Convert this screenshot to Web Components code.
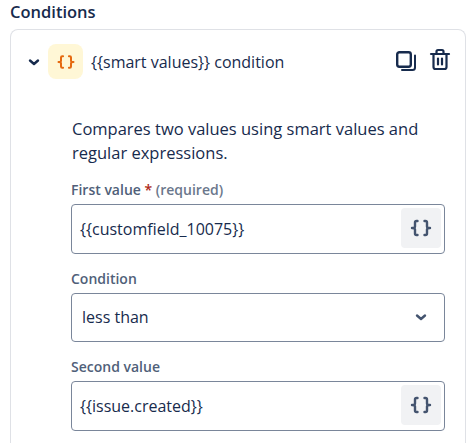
<!DOCTYPE html>
<html>
<head>
<meta charset="utf-8">
<style>
html, body { margin: 0; height: 443px; overflow: hidden; background: #fff; }
body { font-family: "Open Sans", "Noto Sans", sans-serif; color: #172b4d; }
</style>
</head>
<body>
<condition-panel heading="Conditions">
    <condition-card title-text="{{smart values}} condition">
        <p>Compares two values using smart values and regular expressions.</p>
        <value-field label="First value" required value="{{customfield_10075}}"></value-field>
        <select-field label="Condition" value="less than"></select-field>
        <value-field label="Second value" value="{{issue.created}}"></value-field>
    </condition-card>
</condition-panel>

<script>
const BRACES = `<svg width="24" height="24" viewBox="0 0 24 24" fill="none" stroke="currentColor" stroke-width="2.4" stroke-linecap="round" stroke-linejoin="round"><path d="M8.500 5H7.500C6.500 5 6 5.500 6 6.500V10.500C6 11.400 5.400 12 3 12c2.400 0 3 .6 3 1.500v4C6 18.500 6.500 19 7.500 19h1"/><path d="M15.500 5h1c1 0 1.500.5 1.500 1.500v4c0 .9.6 1.500 3 1.500-2.400 0-3 .6-3 1.500v4c0 1-.5 1.500-1.500 1.500h-1"/></svg>`;

class ConditionPanel extends HTMLElement {
    constructor() {
        super();
        this.attachShadow({mode: 'open'});
        this.shadowRoot.innerHTML = `
        <style>
        :host { display: block; padding: 0 2px 0 10px; }
        h2 { margin: 0; padding-top: 1px; height: 28px; font-size: 16.5px; line-height: 22px; font-weight: 600; color: #172b4d; }
        </style>
        <h2></h2>
        <slot></slot>`;
        this.shadowRoot.querySelector('h2').textContent = this.getAttribute('heading');
    }
}

class ConditionCard extends HTMLElement {
    constructor() {
        super();
        this.attachShadow({mode: 'open'});
        this.shadowRoot.innerHTML = `
        <style>
        :host { display: block; height: 414px; box-sizing: border-box; border: 1px solid #dfe1e6; border-bottom: 0; border-radius: 8px 8px 0 0; }
        header { display: flex; align-items: center; height: 35px; margin-top: 14px; padding: 0 14px 0 17px; }
        .chevron { width: 12px; height: 12px; margin-right: 8px; color: #172b4d; }
        .tile { width: 35px; height: 35px; border-radius: 8px; background: #fff7d6; color: #e56910; display: flex; align-items: center; justify-content: center; margin-right: 8px; }
        .tile svg { width: 20px; height: 20px; }
        .title { flex: 1; font-size: 16px; white-space: nowrap; color: #172b4d; }
        .actions { display: flex; gap: 12px; color: #172b4d; margin-top: -4px; }
        .body { padding: 38px 20px 0 60px; }
        ::slotted(p) { margin: 0 0 15px 1px; font-size: 16.5px; line-height: 23.500px; color: #172b4d; }
        </style>
        <header>
            <svg class="chevron" viewBox="0 0 12 12" fill="none" stroke="currentColor" stroke-width="2.4" stroke-linecap="round" stroke-linejoin="round"><path d="M2 4.500l4 3.500 4-3.500"/></svg>
            <span class="tile">${BRACES}</span>
            <span class="title"></span>
            <span class="actions">
                <svg width="23" height="23" viewBox="0 0 23 23" fill="none" stroke="currentColor" stroke-linejoin="round"><rect x="3.200" y="4.200" width="13.600" height="14.600" rx="2.200" stroke-width="2.400"/><path d="M21 7.500v12c0 1.400-1.100 2.500-2.500 2.500H8" stroke-width="2" stroke-linecap="round"/></svg>
                <svg width="22" height="23" viewBox="0 0 22 23" fill="none" stroke="currentColor" stroke-width="2.200" stroke-linecap="round" stroke-linejoin="round"><path d="M2 6h18"/><path d="M7.500 5.500V3.500C7.500 2.500 8 2 9 2h4c1 0 1.500.5 1.500 1.500v2"/><path d="M4.500 6v13c0 1.200.8 2 2 2h9c1.200 0 2-.8 2-2V6"/><path d="M9 10.500v6M13 10.500v6"/></svg>
            </span>
        </header>
        <div class="body"><slot></slot></div>`;
        this.shadowRoot.querySelector('.title').textContent = this.getAttribute('title-text');
    }
}

class ValueField extends HTMLElement {
    constructor() {
        super();
        this.attachShadow({mode: 'open'});
        this.shadowRoot.innerHTML = `
        <style>
        :host { display: block; margin-bottom: 14px; }
        label { display: block; height: 22px; margin-bottom: 3px; font-size: 14px; line-height: 22px; font-weight: 600; color: #505f79; white-space: nowrap; }
        .star { color: #ae2a19; }
        .req { color: #6b778c; }
        .box { display: flex; align-items: center; justify-content: space-between; height: 49.500px; box-sizing: border-box; border: 1px solid #7a869a; border-radius: 4px; padding: 0 3px 0 8px; }
        .value { font-size: 16px; color: #172b4d; white-space: nowrap; padding-top: 1px; }
        .btn { width: 40px; height: 40px; border-radius: 4px; background: #f1f2f4; color: #44546f; display: flex; align-items: center; justify-content: center; margin-top: -1px; }
        </style>
        <label></label>
        <div class="box"><span class="value"></span><span class="btn">${BRACES}</span></div>`;
        const label = this.shadowRoot.querySelector('label');
        label.textContent = this.getAttribute('label');
        if (this.hasAttribute('required')) {
            label.insertAdjacentHTML('beforeend', '<span class="star"> *</span> <span class="req">(required)</span>');
        }
        this.shadowRoot.querySelector('.value').textContent = this.getAttribute('value');
    }
}

class SelectField extends HTMLElement {
    constructor() {
        super();
        this.attachShadow({mode: 'open'});
        this.shadowRoot.innerHTML = `
        <style>
        :host { display: block; margin-bottom: 14px; }
        label { display: block; height: 22px; margin-bottom: 3px; font-size: 14px; line-height: 22px; font-weight: 600; color: #505f79; }
        .box { display: flex; align-items: center; justify-content: space-between; height: 49.500px; box-sizing: border-box; border: 1px solid #7a869a; border-radius: 4px; padding: 0 17px 0 10px; }
        .value { font-size: 16px; color: #172b4d; }
        svg { color: #44546f; }
        </style>
        <label></label>
        <div class="box"><span class="value"></span>
            <svg width="12" height="12" viewBox="0 0 12 12" fill="none" stroke="currentColor" stroke-width="2.400" stroke-linecap="round" stroke-linejoin="round"><path d="M2 4.500l4 3.500 4-3.500"/></svg>
        </div>`;
        this.shadowRoot.querySelector('label').textContent = this.getAttribute('label');
        this.shadowRoot.querySelector('.value').textContent = this.getAttribute('value');
    }
}

customElements.define('condition-panel', ConditionPanel);
customElements.define('condition-card', ConditionCard);
customElements.define('value-field', ValueField);
customElements.define('select-field', SelectField);
</script>
</body>
</html>
